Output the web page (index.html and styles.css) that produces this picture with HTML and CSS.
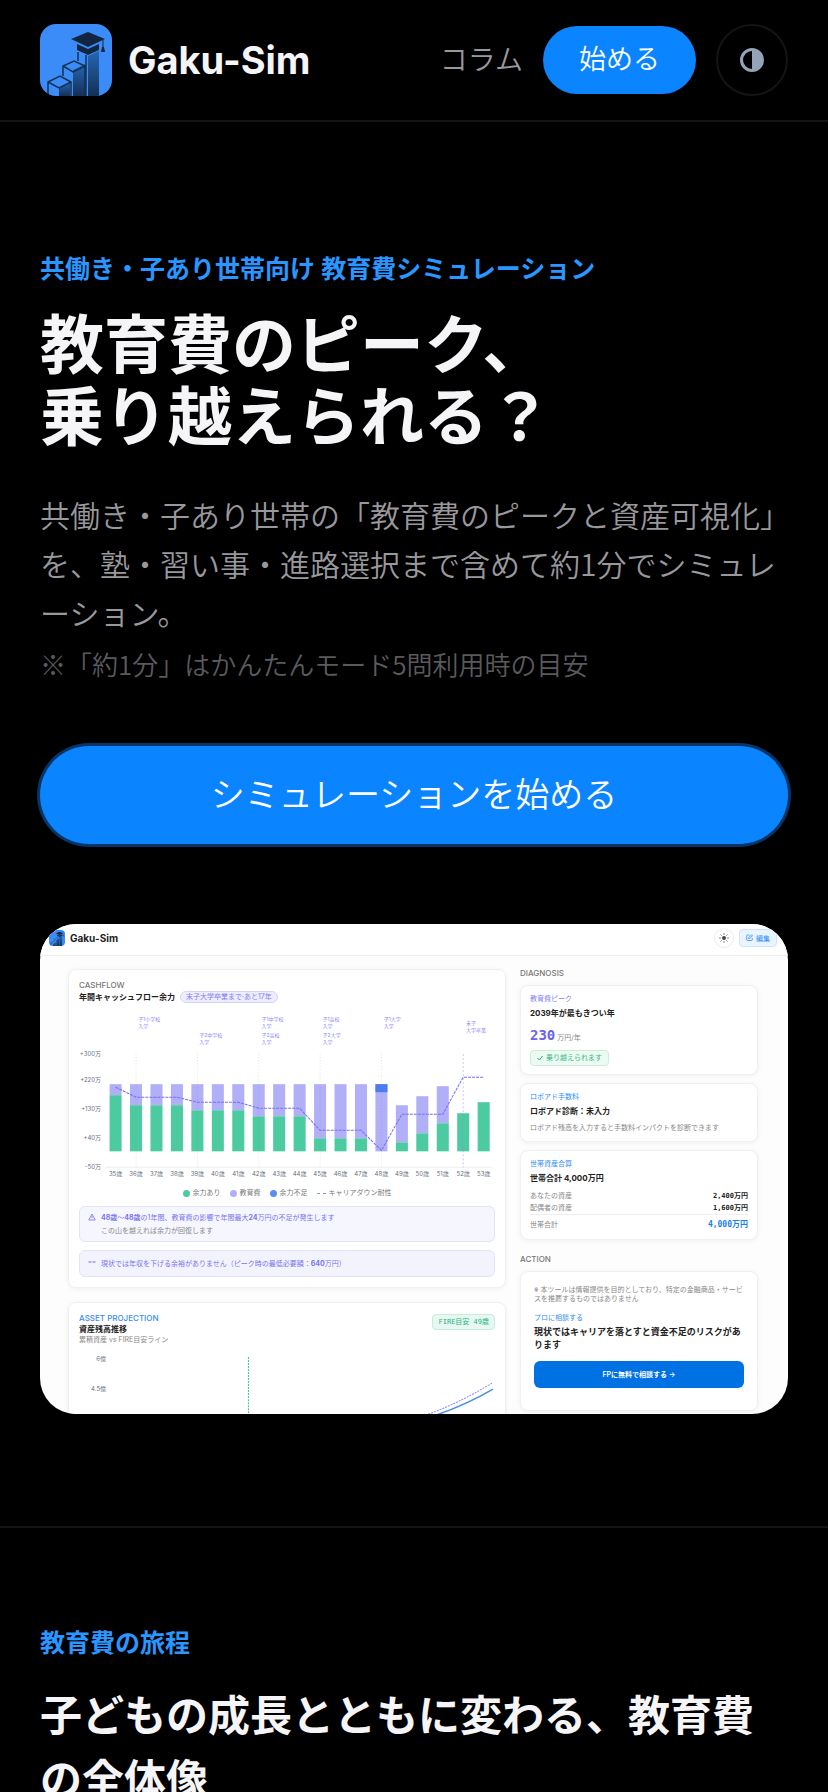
FILE: index.html
```html
<!DOCTYPE html>
<html lang="ja">
<head>
    <meta charset="UTF-8">
    <meta name="viewport" content="width=device-width, initial-scale=1.0">
    <title>Gaku-Sim</title>
    <link rel="stylesheet" href="styles.css">
</head>
<body>

    <svg class="defs" width="0" height="0" aria-hidden="true">
        <defs>
            <linearGradient id="side" x1="0" y1="0" x2="0" y2="1">
                <stop offset="0" stop-color="#2566b4"/>
                <stop offset="1" stop-color="#152f54"/>
            </linearGradient>
            <symbol id="logo" viewBox="0 0 72 72">
                <rect width="72" height="72" fill="#3b8cf8"/>
                <path d="M48 32l11-5v45H48z" fill="url(#side)"/>
                <path d="M33 46l12-6v32H33z" fill="url(#side)"/>
                <path d="M19 64l11-6v14H19z" fill="url(#side)"/>
                <path d="M38 28v9M8 72V58l12-6 11 6v14M8 58l11 6 12-6M23 52V42l11-5 11 5v30M23 42l10 6 12-6M46 31v41" fill="none" stroke="#12304f" stroke-width="1.5"/>
                <path d="M37 20v6l11 5 11-5v-6l-11 5z" fill="#12263f"/>
                <path d="M48 8l17 7-17 8-17-8z" fill="#12263f"/>
                <path d="M63 16v11" stroke="#12263f" stroke-width="1"/>
                <path d="M62 23h2l1 5h-4z" fill="#12263f"/>
            </symbol>
        </defs>
    </svg>

    <header class="site-header">
        <a class="brand" href="#">
            <svg class="brand-logo" aria-hidden="true"><use href="#logo"/></svg>
            <span>Gaku-Sim</span>
        </a>
        <nav class="site-nav">
            <a class="nav-link" href="#">コラム</a>
            <a class="nav-cta" href="#">始める</a>
            <button class="theme-toggle" type="button" aria-label="テーマ切替">
                <svg width="24" height="24" viewBox="0 0 24 24">
                    <circle cx="12" cy="12" r="10.5" fill="none" stroke="#94a3b8" stroke-width="3"/>
                    <path d="M12 1a11 11 0 0 1 0 22z" fill="#94a3b8"/>
                </svg>
            </button>
        </nav>
    </header>

    <main>
        <section class="hero">
            <p class="eyebrow">共働き・子あり世帯向け 教育費シミュレーション</p>
            <h1>教育費のピーク、<br>乗り越えられる？</h1>
            <p class="lead">共働き・子あり世帯の「教育費のピークと資産可視化」を、塾・習い事・進路選択まで含めて約1分でシミュレーション。</p>
            <p class="note">※「約1分」はかんたんモード5問利用時の目安</p>
            <a class="start" href="#">シミュレーションを始める</a>

            <div class="shot">
                <div class="app-bar">
                    <svg class="app-logo" aria-hidden="true"><use href="#logo"/></svg>
                    <b class="app-name">Gaku-Sim</b>
                    <button class="app-theme" type="button" aria-label="ライト">
                        <svg width="10" height="10" viewBox="0 0 10 10">
                            <circle cx="5" cy="5" r="2" fill="#444"/>
                            <path d="M5 0v2M5 8v2M0 5h2M8 5h2M1.5 1.5l1.2 1.2M7.3 7.3l1.2 1.2M1.5 8.5l1.2-1.2M7.3 2.7l1.2-1.2" stroke="#555" stroke-width=".7"/>
                        </svg>
                    </button>
                    <button class="app-edit" type="button">
                        <svg width="7" height="7" viewBox="0 0 14 14" fill="none" stroke="#2f8df5" stroke-width="1.6">
                            <path d="M7 2H3a1.5 1.5 0 0 0-1.5 1.5v8A1.5 1.5 0 0 0 3 13h8a1.5 1.5 0 0 0 1.5-1.5V8"/>
                            <path d="M5 9.5l.5-2.5L11 1.5l2 2L7.5 9z"/>
                        </svg>
                        編集
                    </button>
                </div>

                <div class="app-body">
                    <div class="app-col">
                        <div class="panel panel-main">
                            <div class="kicker">CASHFLOW</div>
                            <div class="title-row">
                                <b class="title">年間キャッシュフロー余力</b>
                                <span class="pill">末子大学卒業まで·あと17年</span>
                            </div>
                            <svg class="chart" id="cashflow" viewBox="0 0 415 170"></svg>
                            <div class="legend">
                                <span><i class="dot green"></i>余力あり</span>
                                <span><i class="dot lilac"></i>教育費</span>
                                <span><i class="dot blue"></i>余力不足</span>
                                <span><i class="dash"></i>キャリアダウン耐性</span>
                            </div>
                            <div class="alert">
                                <svg width="8" height="8" viewBox="0 0 16 16" fill="none" stroke="#6d66ea" stroke-width="1.5">
                                    <path d="M8 2L1.5 14h13zM8 6v4M8 11.5v1"/>
                                </svg>
                                <div>
                                    <p><b>48歳</b>〜<b>48歳</b>の1年間、教育費の影響で年間最大<b>24</b>万円の不足が発生します</p>
                                    <p class="muted">この山を越えれば余力が回復します</p>
                                </div>
                            </div>
                            <div class="alert flat">
                                <svg width="8" height="8" viewBox="0 0 16 16" stroke="#6d66ea" stroke-width="2">
                                    <path d="M1 6h6M9 6h6"/>
                                </svg>
                                <p>現状では年収を下げる余裕がありません（ピーク時の最低必要額：<b>640</b>万円）</p>
                            </div>
                        </div>

                        <div class="panel panel-main">
                            <div class="asset-head">
                                <div>
                                    <div class="kicker asset">ASSET PROJECTION</div>
                                    <b class="title">資産残高推移</b>
                                    <div class="muted">累積資産 vs FIRE目安ライン</div>
                                </div>
                                <span class="fire">FIRE目安 49歳</span>
                            </div>
                            <svg class="chart asset-chart" viewBox="0 0 415 100">
                                <g class="axis" text-anchor="end">
                                    <text x="27" y="16">6億</text>
                                    <text x="27" y="46">4.5億</text>
                                </g>
                                <path d="M169 12v88" stroke="#35c48d" stroke-dasharray="2 1"/>
                                <path d="M340 72Q376 60 412 38" fill="none" stroke="#8b86f2" stroke-dasharray="2 1"/>
                                <path d="M350 72Q384 61 413 44" fill="none" stroke="#4a8ff0" stroke-width="1.5"/>
                            </svg>
                        </div>
                    </div>

                    <div class="app-side">
                        <div class="side-head">DIAGNOSIS</div>
                        <div class="panel card">
                            <div class="label violet">教育費ピーク</div>
                            <b class="title">2039年が最もきつい年</b>
                            <div class="amount"><b>230</b> 万円/年</div>
                            <span class="ok">
                                <svg width="6" height="6" viewBox="0 0 12 12" fill="none" stroke="#22a96f" stroke-width="2"><path d="M1 6l4 4 6-8"/></svg>
                                乗り越えられます
                            </span>
                        </div>
                        <div class="panel card">
                            <div class="label">ロボアド手数料</div>
                            <b class="title">ロボアド診断：未入力</b>
                            <p class="desc">ロボアド残高を入力すると手数料インパクトを診断できます</p>
                        </div>
                        <div class="panel card">
                            <div class="label">世帯資産合算</div>
                            <b class="title">世帯合計 4,000万円</b>
                            <table class="sums">
                                <tr><td>あなたの資産</td><td>2,400万円</td></tr>
                                <tr><td>配偶者の資産</td><td>1,600万円</td></tr>
                                <tr class="total"><td>世帯合計</td><td>4,000万円</td></tr>
                            </table>
                        </div>
                        <div class="side-head action">ACTION</div>
                        <div class="panel consult">
                            <p class="fine">※ 本ツールは情報提供を目的としており、特定の金融商品・サービ<br>スを推薦するものではありません</p>
                            <div class="label">プロに相談する</div>
                            <b class="consult-title">現状ではキャリアを落とすと資金不足のリスクがあります</b>
                            <a class="consult-btn" href="#">FPに無料で相談する →</a>
                        </div>
                    </div>
                </div>
            </div>
        </section>

        <section class="journey">
            <p class="eyebrow">教育費の旅程</p>
            <h2>子どもの成長とともに変わる、教育費の全体像</h2>
        </section>
    </main>

    <script src="chart.js"></script>
</body>
</html>
```
FILE: styles.css
```css
* {
    box-sizing: border-box;
}
body {
    margin: 0;
    background: #000;
    color: #f5f5f7;
    font-family: Inter, "Noto Sans CJK JP", sans-serif;
}
a {
    color: inherit;
    text-decoration: none;
}
p, h1, h2 {
    margin: 0;
}
button {
    font-family: inherit;
    padding: 0;
    cursor: pointer;
}
.defs {
    position: absolute;
}

/* header */
.site-header {
    display: flex;
    align-items: center;
    justify-content: space-between;
    padding: 24px 40px;
    border-bottom: 2px solid #141414;
}
.brand {
    display: flex;
    align-items: center;
    gap: 16px;
    font-size: 38px;
    font-weight: 700;
    line-height: 48px;
}
.brand-logo {
    width: 72px;
    height: 72px;
    border-radius: 16px;
}
.site-nav {
    display: flex;
    align-items: center;
    gap: 20px;
    font-size: 27px;
    font-weight: 350;
    line-height: 68px;
}
.nav-link {
    color: #98989d;
    font-size: 28px;
}
.nav-cta {
    padding: 0 36px;
    border-radius: 34px;
    background: #0a84ff;
    color: #fff;
}
.theme-toggle {
    display: grid;
    place-items: center;
    width: 72px;
    height: 72px;
    border: 2px solid #141414;
    border-radius: 50%;
    background: none;
}

/* hero */
.hero {
    padding: 128px 40px 112px;
}
.eyebrow {
    color: #2997ff;
    font-size: 25px;
    font-weight: 600;
    line-height: 38px;
}
h1 {
    margin-top: 21px;
    font-size: 64px;
    font-weight: 600;
    line-height: 72px;
}
.lead, .note {
    font-family: "Noto Sans CJK JP", sans-serif;
    font-weight: 350;
}
.lead {
    margin-top: 37px;
    color: #98989d;
    font-size: 30px;
    line-height: 49px;
}
.note {
    margin-top: 6px;
    color: #5a5a5e;
    font-size: 26px;
    line-height: 42px;
}
.start {
    display: block;
    margin-top: 61px;
    border-radius: 49px;
    background: #0a84ff;
    box-shadow: 0 0 0 3px rgba(10, 132, 255, 0.4);
    color: #fff;
    font-size: 34px;
    font-weight: 350;
    line-height: 98px;
    text-align: center;
}

/* app preview */
.shot {
    margin-top: 80px;
    aspect-ratio: 748 / 490;
    overflow: hidden;
    border-radius: 36px;
    background: #fdfdfd;
    color: #222;
    font-size: 7px;
    line-height: 10px;
}
.app-bar {
    display: flex;
    align-items: center;
    height: 32px;
    padding: 0 11px 4px 9px;
    border-bottom: 1px solid #eee;
    background: #fff;
}
.app-logo {
    width: 16px;
    height: 16px;
    border-radius: 4px;
}
.app-name {
    margin: 0 auto 0 5px;
    font-size: 10px;
}
.app-theme {
    display: grid;
    place-items: center;
    width: 20px;
    height: 20px;
    margin-right: 5px;
    border: 1px solid #eee;
    border-radius: 50%;
    background: #fff;
}
.app-edit {
    display: flex;
    align-items: center;
    gap: 3px;
    height: 18px;
    padding: 0 6px;
    border: 1px solid #cfe4fb;
    border-radius: 4px;
    background: #eaf4ff;
    color: #2f8df5;
    font-size: 7px;
}
.app-body {
    display: grid;
    grid-template-columns: 438fr 238fr;
    gap: 14px;
    padding: 13px 30px 0 28px;
}
.panel {
    border: 1px solid #f0f0f1;
    border-radius: 8px;
    background: #fff;
    box-shadow: 0 1px 5px rgba(0, 0, 0, 0.06);
}
.panel-main {
    padding: 10px;
}
.panel-main + .panel-main {
    margin-top: 14px;
}
.kicker, .side-head {
    color: #777;
    font-size: 8px;
    font-weight: 500;
}
.kicker.asset {
    color: #3b8cf0;
}
.title {
    display: block;
    font-size: 8px;
    line-height: 12px;
}
.title-row {
    display: flex;
    align-items: center;
    gap: 5px;
    height: 14px;
}
.pill {
    padding: 0 5px;
    border: 1px solid #d4d2fb;
    border-radius: 7px;
    background: #eeedfe;
    color: #837df2;
}
.chart {
    display: block;
    width: 100%;
    margin-top: 8px;
}
.asset-chart {
    margin-top: 0;
}
.axis {
    fill: #66707f;
    font-size: 6px;
}
.event {
    fill: #8f8af5;
    font-size: 5px;
}
.legend {
    display: flex;
    justify-content: center;
    gap: 9px;
    margin-top: 6px;
    color: #777;
}
.legend span {
    display: flex;
    align-items: center;
    gap: 3px;
}
.dot {
    width: 7px;
    height: 7px;
    border-radius: 50%;
}
.green {
    background: #4ccaa0;
}
.lilac {
    background: #b0aff8;
}
.blue {
    background: #5b8def;
}
.dash {
    width: 9px;
    border-top: 1px dashed #8f8af5;
}
.alert {
    display: flex;
    gap: 5px;
    margin-top: 8px;
    padding: 4px 8px;
    border: 1px solid #e3e2fb;
    border-radius: 6px;
    background: #f6f6ff;
    color: #7a74ef;
    line-height: 13px;
}
.alert svg {
    margin-top: 2px;
}
.alert.flat {
    padding: 6px 8px;
    background: #f3f3fd;
}
.muted {
    color: #888;
}
.asset-head {
    display: flex;
    align-items: flex-start;
    justify-content: space-between;
}
.fire {
    margin-top: 1px;
    padding: 2px 5px;
    border: 1px solid #c5ecdd;
    border-radius: 4px;
    background: #e6f8f1;
    color: #25b580;
    font-family: "DejaVu Sans Mono", "Noto Sans CJK JP", monospace;
}
.side-head {
    line-height: 9px;
    margin-bottom: 7px;
}
.side-head.action {
    margin: 15px 0 7px;
}
.card {
    margin-bottom: 8px;
    padding: 8px 9px;
}
.label {
    color: #2f8df5;
    line-height: 10px;
    margin-bottom: 3px;
}
.label.violet {
    color: #8580f3;
}
.amount {
    margin: 8px 0 4px;
    color: #888;
    line-height: 16px;
}
.amount b {
    color: #6a63ec;
    font-family: "DejaVu Sans Mono", monospace;
    font-size: 14px;
}
.ok {
    display: flex;
    align-items: center;
    gap: 3px;
    width: fit-content;
    padding: 2px 6px;
    border: 1px solid #c9efdc;
    border-radius: 4px;
    background: #ecfaf3;
    color: #35b883;
}
.desc {
    margin-top: 6px;
    color: #888;
}
.sums {
    width: 100%;
    margin-top: 6px;
    border-collapse: collapse;
    color: #888;
    line-height: 12px;
}
.sums td {
    padding: 0;
}
.sums td + td {
    color: #222;
    font-family: "DejaVu Sans Mono", "Noto Sans CJK JP", monospace;
    font-weight: 700;
    text-align: right;
}
.sums .total td {
    padding-top: 4px;
    border-top: 1px solid #eee;
}
.sums .total td + td {
    color: #1a80ee;
    font-size: 8px;
}
.consult {
    padding: 13px 13px 22px;
}
.fine {
    margin-bottom: 10px;
    color: #888;
    line-height: 9px;
    white-space: nowrap;
}
.consult .label {
    margin-bottom: 2px;
}
.consult-title {
    display: block;
    font-size: 9px;
    line-height: 13px;
}
.consult-btn {
    display: block;
    margin-top: 10px;
    border-radius: 6px;
    background: #0071e3;
    color: #fff;
    font-weight: 600;
    line-height: 27px;
    text-align: center;
}

/* journey */
.journey {
    padding: 96px 40px;
    border-top: 2px solid #141414;
}
h2 {
    margin-top: 22px;
    font-size: 42px;
    font-weight: 600;
    line-height: 64px;
}
```
FILE: chart.js
```js
// [age, bar top, education bottom (= surplus top), stress line y]
const rows = [
    [35, 72, 83, 75], [36, 72, 93, 85], [37, 72, 93, 85], [38, 72, 93, 85],
    [39, 72, 98, 90], [40, 72, 98, 90], [41, 72, 98, 90],
    [42, 72, 104, 96], [43, 72, 104, 96], [44, 72, 104, 96],
    [45, 72, 126, 118], [46, 72, 126, 118], [47, 72, 126, 118],
    [48, 72, 139, 138], [49, 93, 130, 102], [50, 84, 121, 102],
    [51, 74, 111, 102], [52, 101, 101, 65], [53, 90, 90, 65]
];
const base = 139;
const x = age => 36.5 + (age - 35) * 20.4;

const rect = (cx, top, bottom, fill) =>
    `<rect x="${cx - 6}" y="${top}" width="12" height="${bottom - top}" fill="${fill}"/>`;
const text = (tx, ty, value) => `<text x="${tx}" y="${ty}">${value}</text>`;

let svg = '<path d="M26 155H412" stroke="#eee"/><g class="axis" text-anchor="end">';
[['+300万', 42], ['+220万', 68], ['+130万', 97], ['+40万', 126], ['-50万', 155]].forEach(([label, y]) => {
    svg += text(22, y + 2, label);
});
svg += '</g>';

rows.forEach(([age, top, mid]) => {
    svg += rect(x(age), top, mid, '#b0aff8') + rect(x(age), mid, base, '#4ccaa0');
});
svg += rect(x(48), 72, 80, '#4d7df0');

[36, 39, 42, 45, 48].forEach(age => {
    svg += `<path d="M${x(age)} 42V155" stroke="#64748b" stroke-opacity=".3" stroke-width=".7" stroke-dasharray="1 2"/>`;
});
svg += `<path d="M${x(52)} 42V155" stroke="#8f8af5" stroke-opacity=".7" stroke-width=".7" stroke-dasharray="2 2"/>`;

const points = rows.map(r => `${x(r[0])},${r[3]}`).join(' ');
svg += `<polyline points="${points}" fill="none" stroke="#7370f0" stroke-dasharray="3 1"/>`;

svg += '<g class="axis" text-anchor="middle">';
rows.forEach(([age]) => {
    svg += text(x(age), 164, age + '歳');
});
svg += '</g><g class="event">';
[
    [59, 9, '子1小学校'], [59, 16, '入学'],
    [120, 25, '子2中学校'], [120, 32, '入学'],
    [182, 9, '子1中学校'], [182, 16, '入学'], [182, 25, '子2高校'], [182, 32, '入学'],
    [243, 9, '子1高校'], [243, 16, '入学'], [243, 25, '子2大学'], [243, 32, '入学'],
    [304, 9, '子1大学'], [304, 16, '入学'],
    [386, 13, '末子'], [386, 20, '大学卒業']
].forEach(e => {
    svg += text(...e);
});
svg += '</g>';

document.getElementById('cashflow').innerHTML = svg;
```
